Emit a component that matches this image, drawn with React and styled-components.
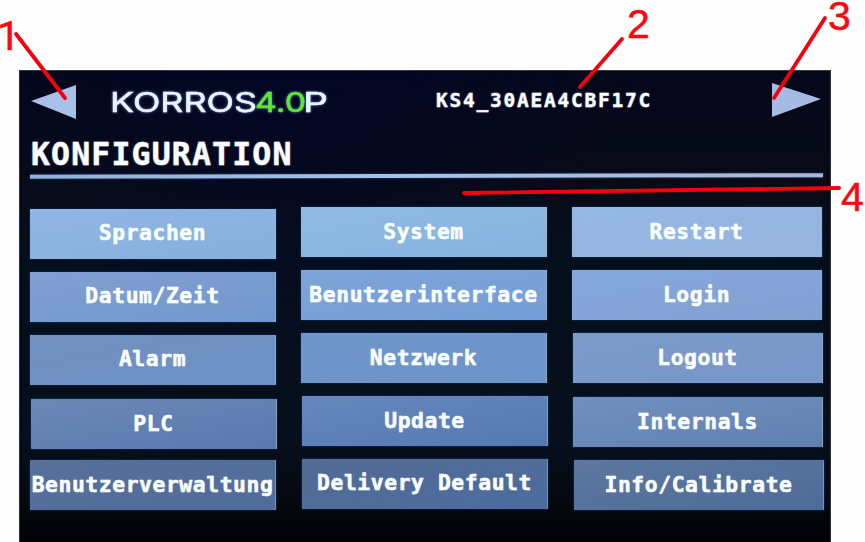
import React from "react";
import styled, { createGlobalStyle } from "styled-components";

const GlobalStyle = createGlobalStyle`
  *, *::before, *::after { box-sizing: border-box; }
  body { margin: 0; background: #fff; overflow: hidden; }
`;

const Figure = styled.main`
  position: relative;
  width: 865px;
  height: 542px;
  padding: 70px 34px 0 19px;
  background: #fefefe;
  overflow: hidden;
`;

const Screen = styled.section`
  display: flex;
  flex-direction: column;
  height: 472px;
  width: 812px;
  padding: 0 7px 0 10px;
  border-top: 1px solid #34363e;
  border-left: 1px solid #2b2f38;
  border-right: 1px solid #30323a;
  color: #fbfdff;
  font-family: "DejaVu Sans Mono", monospace;
  font-weight: 700;
  background:
    radial-gradient(ellipse at 33% 5%, rgba(0, 5, 45, 0.5), transparent 45%),
    linear-gradient(180deg, #05071a 0%, #080b16 25%, #040f1c 40%, #060f1c 78%, #050911 90%, #020207 100%);
`;

const Header = styled.header`
  display: flex;
  align-items: flex-start;
  height: 65px;
  padding-top: 11px;
`;

const NavButton = styled.button`
  display: block;
  width: ${(p) => p.$width}px;
  height: 37px;
  margin-top: ${(p) => p.$top}px;
  padding: 0;
  border: 0;
  background: none;
`;

const Logo = styled.svg`
  display: block;
  width: 226px;
  height: 38px;
  margin: 0 0 0 29px;
  font-family: "Inter", "Liberation Sans", sans-serif;
  font-size: 27.5px;
  font-weight: 400;
  filter: drop-shadow(0 0 1.5px rgba(125, 165, 255, 0.7));
`;

const DeviceId = styled.span`
  width: 235px;
  margin: 7px 100px 0 104px;
  font-size: 19.5px;
  line-height: 24px;
  letter-spacing: 1.76px;
  white-space: nowrap;
  -webkit-text-stroke: 0.3px #fbfdff;
  text-shadow: 0 0 2px rgba(150, 185, 255, 0.6);
`;

const Title = styled.h1`
  height: 38px;
  margin: 0 0 0 1px;
  font-size: 31.5px;
  line-height: 36px;
  letter-spacing: 1.15px;
  -webkit-text-stroke: 0.4px #fbfdff;
  text-shadow: 0 0 2px rgba(150, 185, 255, 0.6);
`;

const Rule = styled.div`
  height: 4px;
  width: 793px;
  background: linear-gradient(90deg, #8fb1dc, #a3c2ec 50%, #aab6db);
  box-shadow: 0 0 2px #37568b;
  transform: rotate(-0.11deg);
`;

const Menu = styled.nav`
  display: flex;
  gap: 25px;
  margin-top: 29px;
`;

const Column = styled.div`
  display: flex;
  flex-direction: column;
  flex: 0 0 ${(p) => p.$width}px;
  min-width: 0;
  padding-top: ${(p) => p.$top}px;
`;

const MenuButton = styled.button`
  display: flex;
  align-items: center;
  justify-content: center;
  height: 50px;
  width: ${(p) => p.$width}px;
  margin: 0 0 ${(p) => p.$gap}px ${(p) => p.$shift}px;
  padding: 0 0 ${(p) => p.$lift}px;
  border: 0;
  border-right: 1px solid rgba(178, 174, 180, 0.5);
  color: #f8fdff;
  background: linear-gradient(170deg, ${(p) => p.$from}, ${(p) => p.$to});
  box-shadow: 0 0 2px #123b78;
  font: 700 21.4px/26px "DejaVu Sans Mono", monospace;
  letter-spacing: 0.55px;
  white-space: nowrap;
  -webkit-text-stroke: 0.35px #f8fdff;
  text-shadow: 0 0 1px rgba(235, 249, 255, 0.7);
`;

const Callouts = styled.svg`
  position: absolute;
  inset: 0;
  width: 865px;
  height: 542px;
  pointer-events: none;
  font-size: 41px;
`;

const CalloutNumber = styled.text`
  fill: #fa0712;
  stroke: #fa0712;
  stroke-width: 0.5px;
  font-family: ${(p) => (p.$footless ? "Roboto" : '"Liberation Sans"')}, Arial, sans-serif;
`;

const columns = [
  {
    width: 246,
    top: 2,
    items: [
      { label: "Sprachen", gap: 13, lift: 2, from: "#91b5e5", to: "#86b0dc" },
      { label: "Datum/Zeit", gap: 13, lift: 2, from: "#829fd2", to: "#7198cd" },
      { label: "Alarm", gap: 14, lift: 2, from: "#7390bf", to: "#6d91c7" },
      { label: "PLC", gap: 11, shift: 1, lift: 1, from: "#6b87b6", to: "#597ab0" },
      { label: "Benutzerverwaltung", gap: 0, lift: 1, from: "#587099", to: "#506c9c" },
    ],
  },
  {
    width: 246,
    top: 0,
    items: [
      { label: "System", gap: 13, lift: 0, from: "#8fb9e1", to: "#86b4e0" },
      { label: "Benutzerinterface", gap: 13, lift: 0, from: "#7ea4d9", to: "#749ed6" },
      { label: "Netzwerk", gap: 13, lift: 0, from: "#6f94c7", to: "#6c95ce" },
      { label: "Update", gap: 13, shift: 1, lift: 1, from: "#6589bd", to: "#5478b1" },
      { label: "Delivery Default", gap: 0, shift: 1, lift: 2, from: "#536b94", to: "#4c6c9e" },
    ],
  },
  {
    width: 250,
    top: 0,
    items: [
      { label: "Restart", gap: 13, lift: 1, from: "#94b7e4", to: "#97b4dd" },
      { label: "Login", gap: 13, lift: 0, from: "#84a7db", to: "#83a0d2" },
      { label: "Logout", gap: 14, shift: 1, lift: 0, from: "#7c9bc9", to: "#7796ca" },
      { label: "Internals", gap: 13, shift: 1, lift: 0, from: "#7190bf", to: "#6080b1" },
      { label: "Info/Calibrate", gap: 0, shift: 2, lift: 0, from: "#5d779e", to: "#4e6c9a" },
    ],
  },
];

const callouts = [
  { n: "1", x: -3, y: 50, footless: true, line: [16, 34, 65, 98] },
  { n: "2", x: 627, y: 38, line: [622, 39, 580, 87] },
  { n: "3", x: 828, y: 30, line: [825, 18, 774, 98] },
  { n: "4", x: 841, y: 211, line: [464, 193, 839, 188] },
];

function Brand() {
  return (
    <Logo viewBox="0 0 226 38" role="img" aria-label="KORROS4.0P" strokeWidth="0.5">
      <text x="4" y="29.5" fill="#eaf4ff" stroke="#eaf4ff" textLength="147" lengthAdjust="spacingAndGlyphs">KORROS</text>
      <text x="149" y="29.5" fill="#5bea2d" stroke="#5bea2d" textLength="51" lengthAdjust="spacingAndGlyphs">4.0</text>
      <text x="197" y="29.5" fill="#eaf4ff" stroke="#eaf4ff" textLength="25" lengthAdjust="spacingAndGlyphs">P</text>
    </Logo>
  );
}

export default function App() {
  return (
    <>
      <GlobalStyle />
      <Figure>
        <Screen>
          <Header>
            <NavButton $width={47} $top={2} aria-label="Zurück">
              <svg width="47" height="37"><path d="M1 17 46 1v34Z" fill="#a9bfe7" /></svg>
            </NavButton>
            <Brand />
            <DeviceId>KS4_30AEA4CBF17C</DeviceId>
            <NavButton $width={52} $top={0} aria-label="Weiter">
              <svg width="52" height="37"><path d="M1 1v34L50 17Z" fill="#a6bbe4" /></svg>
            </NavButton>
          </Header>
          <Title>KONFIGURATION</Title>
          <Rule />
          <Menu>
            {columns.map((col, i) => (
              <Column key={i} $width={col.width} $top={col.top}>
                {col.items.map((item) => (
                  <MenuButton
                    key={item.label}
                    $width={col.width}
                    $gap={item.gap}
                    $shift={item.shift || 0}
                    $lift={item.lift}
                    $from={item.from}
                    $to={item.to}
                  >
                    {item.label}
                  </MenuButton>
                ))}
              </Column>
            ))}
          </Menu>
        </Screen>
        <Callouts>
          {callouts.map(({ n, x, y, footless, line: [x1, y1, x2, y2] }) => (
            <g key={n}>
              <line x1={x1} y1={y1} x2={x2} y2={y2} stroke="#f5000c" strokeWidth="3.8" strokeLinecap="round" />
              <CalloutNumber x={x} y={y} $footless={footless}>{n}</CalloutNumber>
            </g>
          ))}
        </Callouts>
      </Figure>
    </>
  );
}
